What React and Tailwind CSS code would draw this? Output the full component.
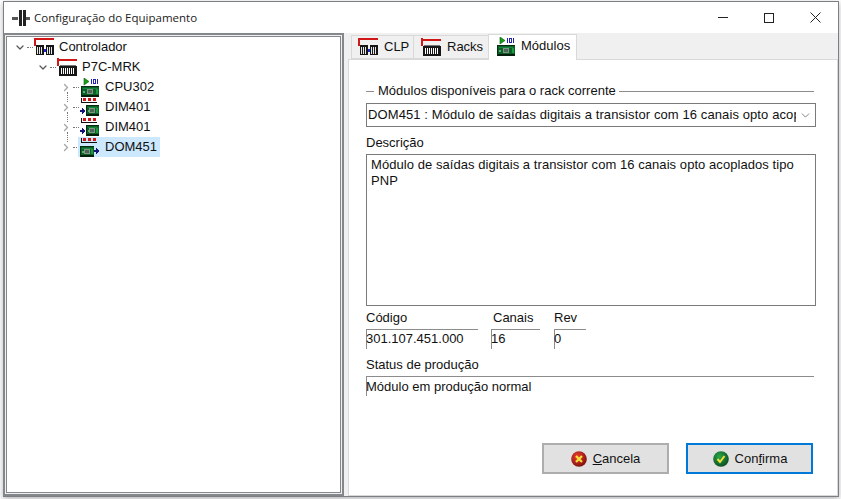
import React from "react";
import { ChevronDown, ChevronRight } from "lucide-react";

const FONT = "font-['Liberation_Sans',Arial,sans-serif]";

// Tiny pixel icons
const Pcb = ({ x = 0, y = 0, w = 18, h = 10 }) => (
    <g shapeRendering="crispEdges">
        <rect x={x} y={y} width={w} height={h} fill="#0c5f26" />
        <rect x={x} y={y} width={w} height="1" fill="#062c12" />
        <rect x={x} y={y + h - 2} width={w} height="2" fill="#04200c" />
        <rect x={x} y={y} width="1" height={h} fill="#062c12" />
        <rect x={x + 2} y={y + 2} width={w - 4} height="1" fill="#16863a" />
        <rect x={x + Math.floor(w / 2) - 3} y={y + 3} width="6" height="5" fill="#7f9686" />
        <rect x={x + Math.floor(w / 2) - 2} y={y + 4} width="4" height="3" fill="#4d6555" />
        <rect x={x + w - 3} y={y + 3} width="2" height="5" fill="#1c9a42" />
        <rect x={x + 2} y={y + 5} width="2" height="2" fill="#5fae76" />
    </g>
);

const RedDashes = () => (
    <g shapeRendering="crispEdges">
        <rect x="3" y="0" width="3" height="3" fill="#d01818" />
        <rect x="8" y="0" width="3" height="3" fill="#d01818" />
        <rect x="13" y="0" width="3" height="3" fill="#d01818" />
        <rect x="1" y="0" width="1" height="5" fill="#111" />
        <rect x="1" y="4" width="16" height="1" fill="#111" />
    </g>
);

const BlueArrow = ({ x, y }) => (
    <g shapeRendering="crispEdges">
        <rect x={x} y={y + 2} width="2" height="2" fill="#16167a" />
        <path d={`M${x + 2} ${y}l4 3l-4 3z`} fill="#16167a" />
    </g>
);

const CpuIcon = () => (
    <svg width="20" height="19" viewBox="0 0 20 19" className="shrink-0">
        <path d="M4 0l5 3.5L4 7z" fill="#16a016" stroke="#0a5a0a" strokeWidth="0.6" />
        <g shapeRendering="crispEdges" fill="#2222b0">
            <rect x="11" y="1" width="1" height="5" />
            <rect x="13" y="1" width="3" height="5" />
            <rect x="14" y="2" width="1" height="3" fill="#fff" />
            <rect x="17" y="1" width="1" height="5" />
        </g>
        <Pcb x={1} y={8} w={18} h={11} />
    </svg>
);

const InputIcon = () => (
    <svg width="20" height="19" viewBox="0 0 20 19" className="shrink-0">
        <RedDashes />
        <BlueArrow x={0} y={10} />
        <Pcb x={6} y={7} w={13} h={11} />
    </svg>
);

const OutputIcon = () => (
    <svg width="20" height="19" viewBox="0 0 20 19" className="shrink-0">
        <RedDashes />
        <Pcb x={0} y={8} w={14} h={11} />
        <BlueArrow x={14} y={10} />
    </svg>
);

const ClpIcon = () => (
    <svg width="20" height="18" viewBox="0 0 20 18" className="shrink-0">
        <g shapeRendering="crispEdges">
            <rect x="0" y="0" width="20" height="2" fill="#d01818" />
            <rect x="0" y="0" width="2" height="8" fill="#d01818" />
            <rect x="2" y="7" width="8" height="10" fill="#161616" />
            <rect x="12" y="7" width="8" height="10" fill="#161616" />
            <rect x="10" y="11" width="2" height="3" fill="#1a2ad0" />
            {[3, 5, 7, 13, 15, 17].map((bx) => (
                <rect key={bx} x={bx} y="9" width="1" height="7" fill="#e8e8e8" />
            ))}
        </g>
    </svg>
);

const RackIcon = () => (
    <svg width="20" height="18" viewBox="0 0 20 18" className="shrink-0">
        <g shapeRendering="crispEdges">
            <rect x="0" y="1" width="20" height="2" fill="#d01818" />
            <rect x="0" y="0" width="2" height="8" fill="#d01818" />
            <rect x="2" y="8" width="18" height="10" fill="#161616" />
            <rect x="3" y="7" width="16" height="1" fill="#777" />
            {[4, 6, 8, 10, 12, 14, 16].map((bx) => (
                <rect key={bx} x={bx} y="10" width="1" height="6" fill="#fff" />
            ))}
        </g>
    </svg>
);

const BallIcon = ({ id, light, dark, children }) => (
    <svg width="16" height="16" viewBox="0 0 16 16" className="shrink-0">
        <defs>
            <radialGradient id={id} cx="40%" cy="35%" r="70%">
                <stop offset="0%" stopColor={light} />
                <stop offset="100%" stopColor={dark} />
            </radialGradient>
        </defs>
        <circle cx="8" cy="8" r="7.8" fill={`url(#${id})`} />
        {children}
    </svg>
);

// Expander + dotted connector of one tree row
const Expander = ({ open, faded, line }) => (
    <span className="relative w-[12px] h-[20px] flex items-center justify-center shrink-0">
        {open ? (
            <ChevronDown size={15} strokeWidth={2.6} className="text-[#595959]" />
        ) : (
            <ChevronRight size={15} strokeWidth={2.6} className={faded ? "text-[#a6a6a6]" : "text-[#595959]"} />
        )}
        {line && <span className="absolute left-[7px] top-[15px] h-[10px] border-l border-dotted border-[#777]" />}
    </span>
);

const Dots = () => <span className="w-[6px] mx-px border-t border-dotted border-[#777] shrink-0" />;

const TreeRow = ({ indent, open, faded, line, icon, label, selected }) => (
    <div className={`h-[20px] flex items-center ${indent}`}>
        <Expander open={open} faded={faded} line={line} />
        <Dots />
        <div className={`flex items-center h-[20px] -ml-[2px] pl-[2px] ${selected ? "bg-[#cce8ff]" : ""}`}>
            {icon}
            <span className="pl-[5px] pr-[3px] text-[13px] text-[#111]">{label}</span>
        </div>
    </div>
);

const Tab = ({ icon, label, active, box }) => (
    <div
        className={`flex items-center border border-[#d9d9d9] ${box} ${
            active
                ? "h-[26px] bg-white border-b-0 pb-[3px] relative z-10 -mb-px"
                : "h-[24px] mt-[2px] bg-[#f0f0f0] -mr-px"
        }`}
    >
        {icon}
        <span className="text-[13px] text-[#111]">{label}</span>
    </div>
);

const Field = ({ label, value, className }) => (
    <div className={className}>
        <div className="h-[16px] leading-[16px] text-[#111]">{label}</div>
        <div className="h-[20px] mt-[3px] border-t border-l border-[#8c8c8c] leading-[18px] indent-[-1px] whitespace-nowrap text-[#111]">
            {value}
        </div>
    </div>
);

export default function App() {
    return (
        <div className={`w-[841px] h-[499px] bg-white pl-[3px] pt-px overflow-hidden ${FONT} text-[13px]`}>
            <div className="w-[836px] h-[496px] border border-[#7b7f85] bg-[#f0f0f0] shadow-[0_2px_6px_rgba(0,0,0,0.3)] flex flex-col">
                {/* Title bar */}
                <div className="h-[31px] bg-white flex items-center shrink-0">
                    <svg width="18" height="18" viewBox="0 0 18 18" className="ml-[8px] shrink-0">
                        <g shapeRendering="crispEdges" fill="#222">
                            <rect x="0" y="8" width="6" height="3" fill="#555" />
                            <rect x="7" y="1" width="3" height="16" />
                            <rect x="11" y="1" width="3" height="16" />
                            <rect x="14" y="8" width="4" height="3" fill="#555" />
                        </g>
                    </svg>
                    <span className="ml-[4px] text-[11.5px] text-[#222] font-['Open_Sans',sans-serif]">
                        Configuração do Equipamento
                    </span>
                    <div className="ml-auto flex items-center h-full">
                        <div className="w-[46px] flex justify-center">
                            <span className="w-[10px] border-t border-[#222]" />
                        </div>
                        <div className="w-[46px] flex justify-center">
                            <span className="w-[10px] h-[10px] border border-[#222]" />
                        </div>
                        <div className="w-[46px] flex justify-center">
                            <svg width="11" height="11" viewBox="0 0 11 11">
                                <path d="M0.5 0.5l10 10M10.5 0.5l-10 10" stroke="#222" strokeWidth="1" />
                            </svg>
                        </div>
                    </div>
                </div>

                <div className="flex-1 flex min-h-0">
                    {/* Tree */}
                    <div className="w-[341px] border-2 border-[#84878c] shrink-0 p-px -ml-px">
                        <div className="h-full bg-white border border-[#84878c]">
                            <TreeRow indent="pl-[7px]" open icon={<ClpIcon />} label="Controlador" />
                            <TreeRow indent="pl-[30px]" open icon={<RackIcon />} label="P7C-MRK" />
                            <TreeRow indent="pl-[53px]" faded line icon={<CpuIcon />} label="CPU302" />
                            <TreeRow indent="pl-[53px]" faded line icon={<InputIcon />} label="DIM401" />
                            <TreeRow indent="pl-[53px]" faded line icon={<InputIcon />} label="DIM401" />
                            <TreeRow indent="pl-[53px]" faded selected icon={<OutputIcon />} label="DOM451" />
                        </div>
                    </div>

                    {/* Tabs */}
                    <div className="flex-1 ml-[4px] flex flex-col min-w-0">
                        <div className="h-[26px] flex items-end shrink-0 pl-[3px]">
                            <Tab icon={<ClpIcon />} label="CLP" box="w-[63px] pl-[6px] gap-[6px]" />
                            <Tab icon={<RackIcon />} label="Racks" box="w-[76px] pl-[7px] gap-[6px]" />
                            <Tab icon={<CpuIcon />} label="Módulos" box="w-[89px] px-[7px] gap-[5px]" active />
                        </div>
                        <div className="flex-1 bg-white border border-[#d9d9d9] pl-[17px] pr-[21px] pt-[23px] min-h-0 flex flex-col">
                            <div className="flex items-center h-[16px] pr-[2px] text-[#111]">
                                <span className="w-[8px] border-t border-[#8c8c8c]" />
                                <span className="pl-[4px] pr-[3px] whitespace-nowrap">Módulos disponíveis para o rack corrente</span>
                                <span className="flex-1 border-t border-[#8c8c8c]" />
                            </div>
                            <div className="mt-[4px] h-[24px] border border-[#7a7a7a] flex items-center pl-px pr-[3px] text-[#111]">
                                <span className="flex-1 overflow-hidden whitespace-nowrap tracking-[0.1px]">
                                    DOM451 : Módulo de saídas digitais a transistor com 16 canais opto acoplados tipo PNP
                                </span>
                                <ChevronDown size={13} strokeWidth={1.5} className="ml-[3px] text-[#666] shrink-0" />
                            </div>
                            <div className="mt-[8px] h-[16px] leading-[16px] text-[#111]">Descrição</div>
                            <div className="mt-[3px] h-[152px] border border-[#7a7a7a] px-[4px] pt-[2px] leading-[16px] tracking-[0.06px] text-[#111]">
                                Módulo de saídas digitais a transistor com 16 canais opto acoplados tipo PNP
                            </div>
                            <div className="flex mt-[4px]">
                                <Field label="Código" value="301.107.451.000" className="w-[112px]" />
                                <Field label="Canais" value="16" className="w-[49px] ml-[13px] [&>div:first-child]:pl-[2px]" />
                                <Field label="Rev" value="0" className="w-[32px] ml-[14px]" />
                            </div>
                            <div className="mt-[8px] h-[16px] leading-[16px] text-[#111]">Status de produção</div>
                            <div className="mt-[3px] h-[20px] mr-[2px] border-t border-l border-[#8c8c8c] leading-[20px] indent-[-1px] text-[#111]">
                                Módulo em produção normal
                            </div>
                            <div className="flex justify-end gap-[17px] mt-[47px] pr-[3px]">
                                <button className="w-[127px] h-[31px] bg-[#e1e1e1] border-2 border-[#adadad] flex items-center justify-center gap-[6px] text-[#111]">
                                    <BallIcon id="ballRed" light="#f04030" dark="#7a0c0c">
                                        <path d="M5 5l6 6M11 5l-6 6" stroke="#f2e23a" strokeWidth="2.2" />
                                    </BallIcon>
                                    <span><u>C</u>ancela</span>
                                </button>
                                <button className="w-[127px] h-[31px] bg-[#e1e1e1] border-2 border-[#0078d7] flex items-center justify-center gap-[6px] pl-px text-[#111]">
                                    <BallIcon id="ballGreen" light="#2aa84a" dark="#0b4a20">
                                        <path d="M4.5 8l2.5 3l4.5-6" fill="none" stroke="#f2e23a" strokeWidth="2" />
                                    </BallIcon>
                                    <span>Con<u>f</u>irma</span>
                                </button>
                            </div>
                        </div>
                    </div>
                </div>
            </div>
        </div>
    );
}
